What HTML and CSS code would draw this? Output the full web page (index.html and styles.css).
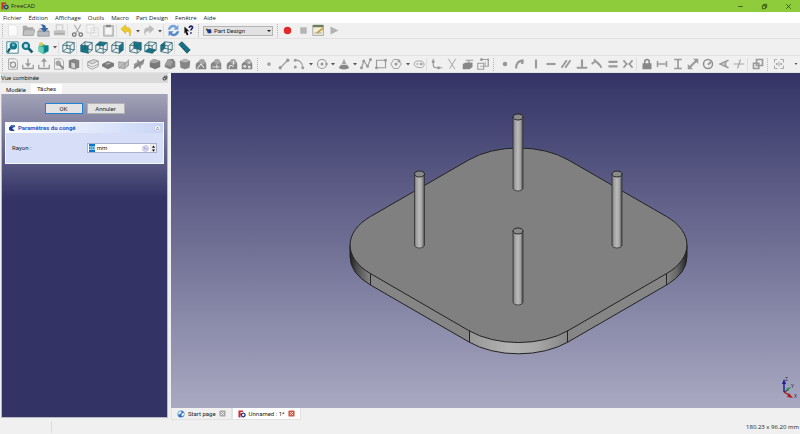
FILE: index.html
```html
<!DOCTYPE html>
<html lang="fr">
<head>
<meta charset="utf-8">
<meta name="viewport" content="width=device-width, initial-scale=1">
<title>FreeCAD</title>
<link rel="stylesheet" href="styles.css">
</head>
<body>
<header class="titlebar">
  <svg class="icon-small" viewBox="0 0 16 16" aria-hidden="true"><use href="#logo"/></svg>
  <h1 class="app-name">FreeCAD</h1>
  <div class="window-buttons">
    <button type="button" aria-label="Réduire"><svg viewBox="0 0 16 16"><path d="M3 8h10" fill="none" stroke="#304a10" stroke-width="2"/></svg></button>
    <button type="button" aria-label="Restaurer"><svg viewBox="0 0 16 16"><path d="M3 6h7v7H3zM6 6V3h7v7h-3" fill="none" stroke="#304a10" stroke-width="2"/></svg></button>
    <button type="button" aria-label="Fermer"><svg viewBox="0 0 16 16"><path d="M3 3l10 10M13 3L3 13" fill="none" stroke="#304a10" stroke-width="2"/></svg></button>
  </div>
</header>
<nav class="menubar">
  <button type="button">Fichier</button>
  <button type="button">Édition</button>
  <button type="button">Affichage</button>
  <button type="button">Outils</button>
  <button type="button">Macro</button>
  <button type="button">Part Design</button>
  <button type="button">Fenêtre</button>
  <button type="button">Aide</button>
</nav>

<section class="toolbars" aria-label="Barres d'outils">
  <div class="toolbar">
    <div class="tools" data-tools="| new open save print , cut copy paste , undo v redo v , refresh whatsthis |"></div>
    <div class="workbench">
      <svg class="workbench-icon" viewBox="0 0 16 16" aria-hidden="true"><path d="M1 3h5l1 2H2z" fill="#c9a520"/><path d="M5 5h9l1 8-6 2-4-3z" fill="#173a8c"/><path d="M2 5h4v3H3z" fill="#222"/></svg>
      <select aria-label="Atelier"><option>Part Design</option></select>
    </div>
    <div class="tools" data-tools="| record stop macro play"></div>
  </div>
  <div class="toolbar">
    <div class="tools" data-tools="| fitall zoomsel style v , iso , front top right , rear bottom left , measure"></div>
  </div>
  <div class="toolbar muted">
    <div class="tools" data-tools="| sketch leave into view map , pad pocket revolve groove fillet chamfer draft mirror linear polar multi | point line arc v circle v conic v polyline rect polygon v slot , cornerf trim external carbon | coincident onobject vertical horizontal parallel perpendicular tangent equal symmetric , lock disth distv distance radius angle snell , construct | select"></div>
    <button type="button" class="more" aria-label="Plus d'outils"><svg viewBox="0 0 8 8"><path d="M1 2h6L4 6z"/></svg></button>
  </div>
</section>

<main class="workspace">
  <aside class="dock">
    <header class="dock-title">
      <h2>Vue combinée</h2>
      <button type="button" aria-label="Détacher"><svg viewBox="0 0 16 16"><path d="M3 7h7v6H3zM7 6V3h6v7h-2" fill="none" stroke="#222" stroke-width="2"/></svg></button>
    </header>
    <div class="dock-tabs" role="tablist">
      <button type="button" role="tab" aria-selected="false">Modèle</button>
      <button type="button" role="tab" aria-selected="true">Tâches</button>
    </div>
    <form class="tasks">
      <div class="actions">
        <button type="button" class="push default">OK</button>
        <button type="button" class="push">Annuler</button>
      </div>
      <section class="card">
        <header class="card-head">
          <svg class="icon-small" viewBox="0 0 16 16" aria-hidden="true"><path d="M2 7l5-5 7 1v3c-4 0-5 2-5 4l4 2-1 2H6L2 12z" fill="#1c3f94"/><path d="M7 2l7 1-1 2-6 1z" fill="#4577d4"/></svg>
          <h3>Paramètres du congé</h3>
          <button type="button" class="fold" aria-label="Replier"><svg viewBox="0 0 16 16"><circle cx="8" cy="8" r="7" fill="#fff" stroke="#a9b6d6"/><path d="M5 8l3-3 3 3M5 12l3-3 3 3" fill="none" stroke="#26407c" stroke-width="1.6"/></svg></button>
        </header>
        <div class="card-body">
          <label for="radius">Rayon :</label>
          <div class="spin">
            <input id="radius" type="text" value="20 mm">
            <svg class="expr" viewBox="0 0 16 16" aria-hidden="true"><circle cx="8" cy="8" r="7" fill="#dcdcf4" stroke="#9a9ad0"/><path d="M4 6h4M6 5v6M9 7l3 4M12 7l-3 4" stroke="#8787c4" fill="none"/></svg>
            <div class="steps">
              <button type="button" aria-label="Augmenter"><svg viewBox="0 0 8 8"><path d="M0 7h8L4 1z"/></svg></button>
              <button type="button" aria-label="Diminuer"><svg viewBox="0 0 8 8"><path d="M0 1h8L4 7z"/></svg></button>
            </div>
          </div>
        </div>
      </section>
    </form>
  </aside>

  <section class="documents">
    <div class="view3d">
      <svg class="scene" viewBox="171 73 629 335" role="img" aria-label="Plaque avec quatre tiges">
        <defs>
          <linearGradient id="side" gradientUnits="userSpaceOnUse" x1="350" y1="0" x2="687" y2="0">
            <stop offset="0" stop-color="#202020"/><stop offset=".02" stop-color="#4c4c4c"/><stop offset=".06" stop-color="#858585"/>
            <stop offset=".35" stop-color="#858585"/><stop offset=".36" stop-color="#989898"/><stop offset=".47" stop-color="#b2b2b2"/>
            <stop offset=".55" stop-color="#a8a8a8"/><stop offset=".645" stop-color="#868686"/><stop offset=".94" stop-color="#858585"/>
            <stop offset=".97" stop-color="#666"/><stop offset="1" stop-color="#222"/>
          </linearGradient>
          <linearGradient id="rod" x1="0" x2="1" y1="0" y2="0">
            <stop offset="0" stop-color="#666"/><stop offset=".2" stop-color="#a0a0a0"/><stop offset=".5" stop-color="#bababa"/>
            <stop offset=".75" stop-color="#a0a0a0"/><stop offset="1" stop-color="#444"/>
          </linearGradient>
          <g id="pillar">
            <path d="M-5 0V71A5 3 0 0 0 5 71V0z" fill="url(#rod)"/>
            <path d="M-5 0V71A5 3 0 0 0 5 71V0" fill="none" stroke="#333" stroke-width=".8"/>
            <ellipse rx="5" ry="3" fill="#8a8a8a" stroke="#1c1c1c" stroke-width=".9"/>
          </g>
        </defs>
        <path d="M350 245V256.5A70 40.4 0 0 0 370.5 285L469 342A70 40.4 0 0 0 568 342L666.5 285A70 40.4 0 0 0 687 256.5V245z" fill="url(#side)" stroke="#222"/>
        <path d="M370.5 216.5L469 159.8A70 40.4 0 0 1 568 159.8L666.5 216.5A70 40.4 0 0 1 666.5 273.6L568 330.7A70 40.4 0 0 1 469 330.7L370.5 273.6A70 40.4 0 0 1 370.5 216.5z" fill="#808080" stroke="#222"/>
        <path d="M370.5 273.6V285M469.5 330.7V342M567.5 330.7V342M666.5 273.6V285" stroke="#222"/>
        <use href="#pillar" x="518" y="117"/>
        <use href="#pillar" x="419.5" y="174"/>
        <use href="#pillar" x="617" y="174"/>
        <use href="#pillar" x="518" y="231"/>
      </svg>
      <svg class="axes" viewBox="0 0 20 24" role="img" aria-label="Axes">
        <path d="M6 16V6" stroke="#1b1b9c" stroke-width="1.4"/><path d="M4 8l2-5 2 5z" fill="#1b1b9c"/>
        <path d="M6 16l4-2" stroke="#222"/><path d="M8 12.600l5-1.600-3 4z" fill="#1e9a3a"/>
        <path d="M6 16l5 3" stroke="#a01818" stroke-width="1.400"/><path d="M11 17l4 5-6-1z" fill="#b01c1c"/>
        <text x="7" y="5">Z</text><text x="13" y="12">Y</text><text x="16" y="22">X</text>
      </svg>
    </div>
    <div class="doc-tabs">
      <div class="doc-tab">
        <svg class="icon-small" viewBox="0 0 16 16" aria-hidden="true"><circle cx="8" cy="8" r="7" fill="#3f82c8"/><path d="M3 4l4-2 2 3-3 3-4 1zM10 7l4-1v4l-4 3-1-3z" fill="#e3f0fa"/><path d="M6 10l2 4-3-1z" fill="#1b447c"/></svg>
        <a href="#start">Start page</a>
        <button type="button" class="close" aria-label="Fermer Start page"><svg viewBox="0 0 16 16"><rect x="1" y="1" width="14" height="14" rx="2" fill="#aaa"/><path d="M5 5l6 6M11 5l-6 6" stroke="#fff" stroke-width="2"/></svg></button>
      </div>
      <div class="doc-tab current">
        <svg class="icon-small" viewBox="0 0 16 16" aria-hidden="true"><use href="#logo"/></svg>
        <a href="#unnamed">Unnamed : 1*</a>
        <button type="button" class="close" aria-label="Fermer Unnamed"><svg viewBox="0 0 16 16"><rect x="1" y="1" width="14" height="14" rx="2" fill="#cf5b45"/><path d="M5 5l6 6M11 5l-6 6" stroke="#fff" stroke-width="2"/></svg></button>
      </div>
    </div>
  </section>
</main>

<footer class="statusbar">
  <span class="message"></span>
  <output>180.23 x 96.20 mm</output>
</footer>

<svg class="sprites" aria-hidden="true">
  <symbol id="logo" viewBox="0 0 16 16">
    <path d="M1 1h9v3H5v3h3v3H5v5H1z" fill="#d22b2b"/>
    <circle cx="10.500" cy="10" r="3.500" fill="none" stroke="#26408c" stroke-width="2.400"/>
    <path d="M10.500 4.500v2M10.500 13.500v2M5 10h2M14 10h2M6.600 6.100l1.400 1.400M13 12.500l1.400 1.400M14.400 6.100L13 7.500M8 12.500l-1.400 1.400" stroke="#26408c" stroke-width="1.800"/>
  </symbol>
</svg>
<script src="app.js"></script>
</body>
</html>
```
FILE: styles.css
```css
* { box-sizing: border-box; }

body {
  margin: 0;
  min-height: 100vh;
  display: flex;
  flex-direction: column;
  background: #f0f0f0;
  color: #222;
  font: 6px/10px Roboto, "Noto Sans", sans-serif;
}

h1, h2, h3 { margin: 0; font-size: inherit; font-weight: inherit; }

button {
  padding: 0;
  border: 0;
  background: none;
  color: inherit;
  font: inherit;
}

svg { display: block; }
.sprites { position: absolute; width: 0; height: 0; }
.icon-small { width: 8px; height: 8px; flex: none; }

.titlebar, .menubar, .statusbar { font-family: "Open Sans", "Noto Sans", sans-serif; }

.titlebar {
  display: flex;
  align-items: center;
  gap: 2px;
  height: 12px;
  padding-left: 1px;
  background: #8fcc3c;
}
.window-buttons { display: flex; margin-left: auto; }
.window-buttons button { width: 24px; height: 12px; display: grid; place-items: center; }
.window-buttons svg { width: 7px; height: 7px; }

.menubar {
  display: flex;
  gap: 7px;
  height: 11px;
  padding: 0 3px;
  background: #fff;
}

.toolbars { background: #f0f0f0; }
.toolbar {
  display: flex;
  align-items: center;
  height: 17px;
  border-bottom: 1px solid #e2e2e2;
}
.toolbar:first-child { height: 16px; }
.tools, .group { display: flex; align-items: center; }
.group button { flex: 1; display: grid; place-items: center; height: 14px; }
.group svg { width: 13px; height: 13px; }
.muted .group svg { width: 12px; height: 12px; opacity: .85; }
.n1 { width: 15px; }
.n2 { width: 30px; }
.n3 { width: 46px; }
.n4 { width: 62px; }
.n5 { width: 77px; }
.n7 { width: 108px; }
.n9 { width: 139px; }
.n11 { width: 170px; }
.drop { width: 7px; height: 14px; display: grid; place-items: center; }
.drop svg, .more svg { width: 4px; height: 4px; fill: #555; }
.sep { width: 3px; height: 13px; border-left: 1px solid #dedede; }
.handle { width: 6px; height: 13px; padding-left: 2px; }
.handle::before { content: ""; display: block; height: 100%; border-left: 1px dotted #b4b4b4; }
.tools > .handle:first-child { width: 5px; }
.more { margin-left: auto; padding-right: 2px; }

.workbench { position: relative; margin: 0 2px 0 1px; }
.workbench-icon { position: absolute; left: 2px; top: 1px; width: 7px; height: 7px; }
.workbench select {
  display: block;
  appearance: none;
  width: 70px;
  height: 10px;
  padding: 0 0 0 10px;
  border: 1px solid #b4b4b4;
  border-radius: 0;
  background: #e2e2e2;
  color: #222;
  font: 6px/8px Roboto, "Noto Sans", sans-serif;
}
.workbench::after {
  content: "";
  position: absolute;
  right: 2px;
  top: 4px;
  border: 2px solid transparent;
  border-top-color: #222;
}

.workspace { flex: 1; display: flex; }

.dock { width: 168px; flex: none; display: flex; flex-direction: column; padding: 0 0 2px 1px; }
.dock-title {
  display: flex;
  justify-content: space-between;
  align-items: center;
  height: 10px;
  background: #dadada;
}
.dock-title svg { width: 6px; height: 6px; }
.dock-tabs { display: flex; align-items: flex-end; height: 11px; }
.dock-tabs button { height: 9px; padding: 0 5px; line-height: 9px; }
.dock-tabs [aria-selected="true"] { height: 10px; padding: 0 6px; background: #fff; line-height: 10px; }
.tasks {
  flex: 1;
  padding: 9px 3px;
  border: 1px solid #b9b9c6;
  border-top: 0;
  background: linear-gradient(#a2a2b8, #333366 104px);
}
.actions { display: flex; justify-content: center; gap: 4px; }
.push {
  width: 38px;
  height: 11px;
  border: 1px solid #b2b2b2;
  background: #e3e3e3;
  line-height: 9px;
}
.push.default { border-color: #1f82d2; }
.card { margin-top: 8px; border: 1px solid #f4f6fe; background: #d6dff7; }
.card-head {
  display: flex;
  align-items: center;
  gap: 2px;
  height: 10px;
  padding: 0 2px;
  background: linear-gradient(90deg, #fff, #c8d5f7);
  color: #2158c8;
  font-weight: bold;
}
.fold { margin-left: auto; }
.fold svg { width: 7px; height: 7px; }
.card-body {
  display: grid;
  grid-template-columns: 1fr 1fr;
  align-items: center;
  gap: 4px;
  padding: 10px 6px;
}
.spin { display: flex; align-items: center; height: 10px; border: 1px solid #a8b2c8; background: #fff; }
.spin input {
  flex: 1;
  min-width: 0;
  height: 8px;
  padding: 0 1px;
  border: 0;
  outline: 0;
  background: none;
  color: #222;
  font: 6px/8px Roboto, "Noto Sans", sans-serif;
}
.spin input::selection { background: #0a76d0; color: #fff; }
.expr { width: 7px; height: 7px; margin-right: 1px; }
.steps { width: 6px; height: 8px; background: #ececec; }
.steps button { display: grid; place-items: center; width: 6px; height: 4px; }
.steps svg { width: 3px; height: 3px; }

.card-body > .spin { min-width: 0; }

.documents { flex: 1; min-width: 0; display: flex; flex-direction: column; margin-left: 3px; }
.view3d {
  position: relative;
  flex: 1;
  background: linear-gradient(#333366, #a9a9c2);
}
.scene { position: absolute; inset: 0; width: 100%; height: 100%; }
.axes { position: absolute; right: 2px; bottom: 8px; width: 20px; height: 24px; fill: none; }
.axes text { fill: #223; font: 5px "Open Sans", sans-serif; }
.doc-tabs { display: flex; height: 12px; }
.doc-tab {
  display: flex;
  align-items: center;
  gap: 3px;
  padding: 0 5px;
  border: 1px solid #e2e2e2;
  border-top: 0;
}
.doc-tab.current { background: #fff; }
.doc-tab a { color: inherit; text-decoration: none; }
.close svg { width: 7px; height: 7px; }

.statusbar { display: flex; justify-content: space-between; align-items: center; height: 14px; }
.message { width: 52px; height: 12px; border-right: 1px solid #dcdcdc; }
.statusbar output { padding-right: 1px; }
```
FILE: app.js
```js
const G = "#8c8c8c";
const stroke = (d, w = 1.5, c = G) => `<path d="${d}" fill="none" stroke="${c}" stroke-width="${w}"/>`;
const fill = (d, c = G) => `<path d="${d}" fill="${c}"/>`;
const dot = (x, y, r = 2, c = G) => `<circle cx="${x}" cy="${y}" r="${r}" fill="${c}"/>`;

// Wireframe cube with one optional painted face.
const cube = (face) =>
  (face ? fill(face, "#14778c") : "") +
  stroke("M1 5L10 6V15L1 13ZM1 5L6 1L15 2L10 6M15 2V11L10 15M6 1V9L15 11M6 9L1 13", 1, "#25616e");

const solid = (top, front) =>
  fill("M2 5l6-4 6 3v8l-6 3-6-3z", front) + fill("M2 5l6-4 6 3-6 3z", top) + stroke("M2 5l6 2 6-3M8 7v8M2 5l6-4 6 3v8l-6 3-6-3z", 0.8, "#555");

const feature = (extra) =>
  fill("M1 8l3-3h10l1 3v7H1z", "#747474") + fill("M5 5c0-4 6-5 8-2l1 4-5 2z", "#999") + extra;

const page = stroke("M2 1h9l3 3v11H2z", 1.1, "#999");

const icons = {
  new: ["Nouveau", fill("M3 1h8l3 3v11H3z", "#fbfbfb") + stroke("M3 1h8l3 3v11H3z", 0.7, "#d4d4d4")],
  open: ["Ouvrir", fill("M1 2h5l1 2h7v10H1z", "#aaa") + fill("M3 7h13l-2 7H1z", "#c2c2c2") + stroke("M3 7h13l-2 7H1z", 0.8, "#999")],
  save: ["Enregistrer", fill("M1 9l2-4h10l2 4v6H1z", "#b9bec4") + stroke("M1 9h14v6H1z", 0.8, "#888") + fill("M4 1c4-1 7 0 7 4h3l-5 5-5-5h3c0-2-1-3-3-4z", "#3465a4")],
  print: ["Imprimer", fill("M4 1h8v7H4z", "#eee") + stroke("M4 1h8v7H4z", 0.8, "#b5b5b5") + fill("M1 8h14v6H1z", "#c2c2c2") + stroke("M2 12h12", 1, "#999")],
  cut: ["Couper", stroke("M4 1l6 10M12 1L6 11", 1.3, "#aaa") + `<circle cx="4" cy="13" r="2.200" fill="none" stroke="#777" stroke-width="1.600"/><circle cx="12" cy="13" r="2.200" fill="none" stroke="#777" stroke-width="1.600"/>`],
  copy: ["Copier", fill("M1 1h9v10H1zM6 5h9v10H6z", "#f5f5f5") + stroke("M1 1h9v10H1zM6 5h9v10H6zM8 8h5M8 11h5", 0.9, "#cfcfcf")],
  paste: ["Coller", fill("M2 2h12v13H2z", "#cdcdcd") + fill("M4 4h8v9H4z", "#f6f6f6") + stroke("M2 2h12v13H2z", 0.8, "#999") + fill("M5 1h6v3H5z", "#888")],
  undo: ["Annuler", fill("M1 6l6-5v3c6 0 8 4 5 11 0-5-1-6-5-6v3z", "#edc928") + stroke("M1 6l6-5v3c6 0 8 4 5 11 0-5-1-6-5-6v3z", 0.6, "#c9a415")],
  redo: ["Rétablir", fill("M15 6L9 1v3C3 4 1 8 4 15c0-5 1-6 5-6v3z", "#bcbcbc")],
  refresh: ["Rafraîchir", fill("M1 7c1-6 8-8 11-4l2-2v6H8l2-2C8 3 5 4 4 7z", "#74a3dc") + fill("M15 9c-1 6-8 8-11 4l-2 2V9h6l-2 2c2 2 5 1 6-2z", "#5288c8")],
  whatsthis: ["Qu'est-ce que c'est ?", fill("M3 3l6 6H6l2 4-2 1-2-4-1 2z", "#111") + stroke("M9 5c0-3 4-3 4-1 0 2-2 2-2 4M11 10v2", 2, "#20206c")],
  record: ["Enregistrer la macro", dot(8, 8, 4.6, "#e02a2a")],
  stop: ["Arrêter", fill("M4 4h8v8H4z", "#b5b5b5")],
  macro: ["Macros", fill("M1 2h13v12H1z", "#f2f0dc") + stroke("M1 2h13v12H1zM3 11h9", 1, "#999") + fill("M1 1h13v3H1z", "#6f7d5c") + stroke("M6 11l8-6", 2.2, "#c9a042")],
  play: ["Exécuter", fill("M3 3l10 5-10 5z", "#b3b3b3")],
  fitall: ["Tout afficher", fill("M0 0h16v16H0z", "#fff") + stroke("M1 1h14v14H1z", 1.2, "#3d7f8c") + stroke("M5 9l-3 5", 2.8, "#165c6c") + dot(9, 6, 4.6, "#14778c") + dot(9, 5, 1.8, "#69bac8")],
  zoomsel: ["Zoom", stroke("M9 9l5 5", 3.4, "#165c6c") + dot(6, 6, 5.2, "#14778c") + dot(6, 6, 2.5, "#bfe2e8")],
  style: ["Style", fill("M2 6l6-2 6 2v7l-6 3-6-3z", "#1aa88c") + fill("M2 6l6 2v8l-6-3z", "#64d2b4") + dot(5, 4, 2.6, "#d6c766") + fill("M9 7l5-2v7l-5 2z", "#14778c")],
  iso: ["Axonométrique", cube()],
  front: ["Face", cube("M1 5L10 6V15L1 13Z")],
  top: ["Dessus", cube("M1 5L6 1L15 2L10 6Z")],
  right: ["Droite", cube("M10 6L15 2V11L10 15Z")],
  rear: ["Arrière", cube("M6 1L15 2V11L6 9Z")],
  bottom: ["Dessous", cube("M1 13L6 9L15 11L10 15Z")],
  left: ["Gauche", cube("M1 5L6 1V9L1 13Z")],
  measure: ["Mesurer", fill("M1 4l4-3 10 10-4 4z", "#14778c") + stroke("M1 4l4-3 10 10-4 4zM6 5L4 7M9 8l-2 2M12 11l-2 2", 1, "#154d5a")],
  sketch: ["Esquisse", page + `<circle cx="8" cy="9" r="3.500" fill="none" stroke="#888" stroke-width="1.500"/>` + stroke("M3 5l4 3M10 10l3 3", 1)],
  leave: ["Quitter l'esquisse", stroke("M1 9v5h14V9M8 1v9", 1.7) + fill("M4 7h8l-4 5z")],
  into: ["Importer", stroke("M1 9v5h14V9M8 4v8", 1.7) + fill("M4 5h8L8 0z")],
  view: ["Voir l'esquisse", page + dot(7, 7, 3.6, "#999") + stroke("M9 9l5 5", 2.4, "#777")],
  map: ["Appliquer", fill("M1 3l7-2 7 2v10l-7 2-7-2z", "#777") + fill("M4 5l6 2v8l-6-2z", "#d0d0d0") + stroke("M4 5l6 2v8l-6-2z", 0.8, "#555")],
  pad: ["Protrusion", fill("M1 5l8-3 6 2-8 4z", "#d0d0d0") + stroke("M1 5l8-3 6 2-8 4zM1 9l6 3 8-4M1 12l6 3 8-4V4M1 5v7", 1.1, "#888")],
  pocket: ["Cavité", fill("M0 8l8-4 8 3v4l-8 4-8-4z", "#666") + fill("M4 8l5-2 3 1-5 2z", "#aaa")],
  revolve: ["Révolution", fill("M1 5l9 1 4-3v7l-6 5-7-2z", "#b5b5b5") + stroke("M1 5l8 1v8M1 14L15 2M1 5v8l8 1 5-4V3", 1, "#888")],
  groove: ["Rainure", fill("M1 8l4-2 1-4 4 3 5-2-1 5-3 2-1 5-3-4-5 3z", "#888") + stroke("M1 14L15 2", 1.4, "#666")],
  fillet: ["Congé", fill("M1 6c1-4 6-5 8-4l6 2v8l-7 3-7-3z", "#656565") + fill("M1 6c1-4 6-5 8-4l6 2-7 3z", "#999")],
  chamfer: ["Chanfrein", fill("M1 9l4-7 7-1 3 4v7l-7 3-7-3z", "#707070") + fill("M1 9l4-7 7 2-3 7z", "#919191")],
  draft: ["Dépouille", fill("M1 4l7-3 7 3-1 9-6 2-6-2z", "#747474") + fill("M1 4l7-3 7 3-7 2z", "#aaa")],
  mirror: ["Symétrie", feature(stroke("M3 14l5-6 4 5", 1.4, "#eee"))],
  linear: ["Répétition linéaire", feature(stroke("M3 12h10M9 9v5", 1.4, "#ddd"))],
  polar: ["Répétition circulaire", feature(stroke("M4 14c0-5 4-5 6-2M10 4v5", 1.4, "#eee"))],
  multi: ["Transformation multiple", feature(dot(5, 11, 2, "#ddd") + dot(11, 12, 2, "#ddd") + dot(11, 6, 1.5, "#ddd"))],
  point: ["Point", dot(8, 8, 2.5, "#999")],
  line: ["Ligne", stroke("M3 13L13 3") + dot(3, 13, 2.3) + dot(13, 3, 2.3)],
  arc: ["Arc", stroke("M3 3c6-1 10 4 10 10", 1.5) + dot(3, 3) + dot(13, 13) + dot(3, 12)],
  circle: ["Cercle", `<circle cx="8" cy="8" r="6" fill="none" stroke="#8c8c8c" stroke-width="1.500"/>` + dot(8, 8) + dot(14, 8, 1.7)],
  conic: ["Conique", fill("M8 1l3 7H5z", "#999") + fill("M4 9h8l3 4c-3 3-11 3-14 0z", "#777")],
  polyline: ["Polyligne", stroke("M2 13L5 4l5 7 4-9") + dot(2, 13) + dot(5, 4) + dot(10, 11) + dot(14, 2)],
  rect: ["Rectangle", stroke("M2 3h12v10H2z") + dot(2, 13) + dot(14, 3)],
  polygon: ["Polygone", stroke("M5 2h6l4 6-4 6H5L1 8z", 1.2) + dot(8, 8) + dot(12, 4)],
  slot: ["Rainure", stroke("M5 12C0 11 1 4 6 4h5c5 1 5 8 0 9zM4 8h4", 1.2) + dot(11, 8, 1.7)],
  cornerf: ["Congé d'esquisse", stroke("M3 1v8c0 3 1 4 4 4h8") + dot(3, 5) + dot(10, 13)],
  trim: ["Ajuster", stroke("M3 1l9 14M13 1L5 14", 1.3, "#999")],
  external: ["Géométrie externe", fill("M1 8l4-2h9v6l-4 3H1z", "#777") + stroke("M5 3h10M9 3v4", 1.5)],
  carbon: ["Copie carbone", stroke("M1 7h8v8H1z", 1.4) + stroke("M6 2h9v9h-4", 1.6) + dot(6, 2) + dot(15, 2, 1.5) + stroke("M4 11h7V5", 1)],
  coincident: ["Coïncidence", dot(8, 8, 3, "#888")],
  onobject: ["Point sur objet", stroke("M3 14C2 8 6 3 13 3", 3) + dot(11, 6, 2)],
  vertical: ["Vertical", stroke("M8 2v12", 2.8)],
  horizontal: ["Horizontal", stroke("M2 8h12", 2.8)],
  parallel: ["Parallèle", stroke("M2 13L9 3M7 13l7-10", 2.6)],
  perpendicular: ["Perpendiculaire", stroke("M8 2v11M1 13h14", 2.8)],
  tangent: ["Tangence", stroke("M1 8c5-5 9-3 13 5M4 2l9 9", 2.4)],
  equal: ["Égalité", stroke("M2 5h12M2 11h12", 3)],
  symmetric: ["Symétrie", stroke("M2 3l4 5-4 5M14 3l-4 5 4 5", 2.4) + dot(8, 8, 1)],
  lock: ["Verrouiller", fill("M2 7h12v8H2z", "#777") + stroke("M5 8V5c0-4 6-4 6 0v3", 2, "#777")],
  disth: ["Distance horizontale", stroke("M2 4v8M14 4v8M2 8h12", 2)],
  distv: ["Distance verticale", stroke("M3 2h10M3 14h10M8 2v12", 2.2)],
  distance: ["Distance", stroke("M3 13L13 3", 2.8) + fill("M8 1h7v7zM1 8v7h7z")],
  radius: ["Rayon", `<circle cx="8" cy="8" r="6" fill="none" stroke="#808080" stroke-width="2"/>` + stroke("M8 9l4-4", 2.6)],
  angle: ["Angle", stroke("M14 3L3 8l11 5M10 4v8", 2.2)],
  snell: ["Réfraction", stroke("M1 8h14M10 2L8 8l-2 6", 1.6, "#999")],
  construct: ["Construction", stroke("M6 2h8v8H6zM2 7h7v7H2z", 2.2)],
  select: ["Sélection", stroke("M2 6V2h3M10 2h4v4M14 10v4h-4M6 14H2v-4M8 5v6", 1.3, "#999") + dot(5, 8, 1.2) + dot(11, 8, 1.2)],
};

function renderTools(root) {
  let group = null;
  const plain = (name) => {
    const el = document.createElement("span");
    el.className = name;
    root.append(el);
    group = null;
  };
  for (const key of root.dataset.tools.split(" ")) {
    if (key === "|") { plain("handle"); continue; }
    if (key === ",") { plain("sep"); continue; }
    const button = document.createElement("button");
    button.type = "button";
    if (key === "v") {
      button.className = "drop";
      button.setAttribute("aria-label", "Options");
      button.innerHTML = '<svg viewBox="0 0 8 8"><path d="M0 2h8L4 7z"/></svg>';
      root.append(button);
      group = null;
      continue;
    }
    const [label, art] = icons[key];
    button.setAttribute("aria-label", label);
    button.innerHTML = `<svg viewBox="0 0 16 16">${art}</svg>`;
    if (!group) {
      group = document.createElement("div");
      root.append(group);
    }
    group.append(button);
    group.className = `group n${group.children.length}`;
  }
}

document.querySelectorAll("[data-tools]").forEach(renderTools);

const radius = document.getElementById("radius");
radius.focus();
radius.setSelectionRange(0, 2);
```
